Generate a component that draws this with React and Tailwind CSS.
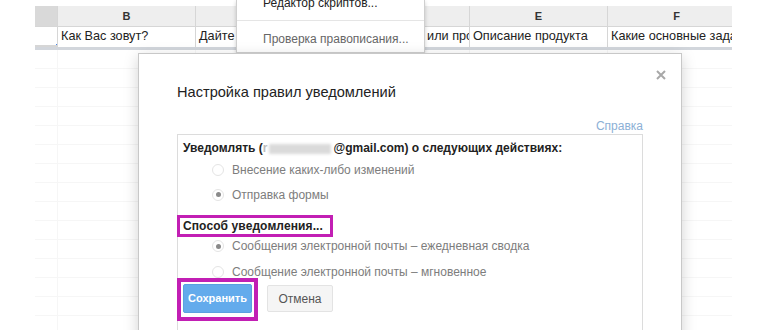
import React from 'react';

const cols = [
  { w: 'w-[23px]', head: '', text: '' },
  { w: 'w-[138px]', head: 'B', text: 'Как Вас зовут?' },
  { w: 'w-[137px]', head: 'C', text: 'Дайте ссылку' },
  { w: 'w-[137px]', head: 'D', text: 'Ваш веб-сайт или продукт', pad: 'pl-[10px]' },
  { w: 'w-[138px]', head: 'E', text: 'Описание продукта' },
  { w: 'w-[138px]', head: 'F', text: 'Какие основные задачи' },
];

const Radio = ({ checked }) => (
  <span className="w-[12px] h-[12px] rounded-full border border-[#e4e4e4] bg-white flex items-center justify-center shrink-0">
    {checked && <span className="w-[5px] h-[5px] rounded-full bg-[#8a8a8a]" />}
  </span>
);

const Option = ({ checked, label, className }) => (
  <div className={`flex items-center gap-[8px] pl-[29px] h-[20px] ${className}`}>
    <Radio checked={checked} />
    <span className="text-[12px] text-[#7d7d7d] whitespace-nowrap">{label}</span>
  </div>
);

export default function App() {
  return (
    <div className="relative w-[770px] h-[330px] overflow-hidden bg-white font-['Liberation_Sans',Arial,sans-serif]">
      {/* sheet in the background */}
      <div className="flex">
        <div className="w-[35px] shrink-0" />
        <div className="w-[697px] overflow-hidden">
          <div className="h-[6px]" />
          <div className="flex h-[21px] bg-[#eeeeee] border-b border-[#d6d6d6] w-max">
            {cols.map((c, i) => (
              <div
                key={i}
                className={`${c.w} shrink-0 border-r border-[#d6d6d6] flex items-center justify-center text-[11px] font-bold text-[#333] ${i === 0 ? 'bg-[#d9d9d9]' : ''}`}
              >
                {c.head}
              </div>
            ))}
          </div>
          <div className="flex h-[20px] w-max">
            {cols.map((c, i) => (
              <div
                key={i}
                className={`${c.w} shrink-0 border-r border-[#d6d6d6] flex items-center px-[3px] ${c.pad || ''} text-[12.7px] text-[#222] whitespace-nowrap overflow-hidden ${i === 0 ? 'relative border-2 border-[#4a86e8] border-l-0 border-t-0' : ''}`}
              >
                {c.text}
                {i === 0 && (
                  <span className="absolute right-[-4px] bottom-[-4px] w-[6px] h-[6px] bg-[#4a86e8] border border-white" />
                )}
              </div>
            ))}
          </div>
          <div className="h-[3px] bg-[#d2d6dc]" />
          {Array.from({ length: 15 }).map((_, r) => (
            <div key={r} className="flex h-[19px] w-max border-b border-[#dcdcdc]">
              {cols.map((c, i) => (
                <div key={i} className={`${c.w} shrink-0 border-r border-[#dcdcdc]`} />
              ))}
            </div>
          ))}
        </div>
      </div>

      {/* modal backdrop */}
      <div className="absolute left-0 right-0 top-[50px] bottom-0 bg-white/75" />

      {/* tools menu */}
      <div className="absolute left-[236px] top-0 w-[189px] h-[53px] bg-white border border-t-0 border-[#cfcfcf] shadow-[0_2px_4px_rgba(0,0,0,0.2)] overflow-hidden">
        <div className="-mt-[10px]">
          <div className="h-[25px] flex items-center pl-[26px] text-[12px] text-[#222]">Редактор скриптов...</div>
          <div className="my-[5px] border-t border-[#e5e5e5]" />
          <div className="h-[26px] flex items-center pl-[26px] text-[12px] text-[#666]">Проверка правописания...</div>
        </div>
      </div>

      {/* dialog */}
      <div className="absolute left-[138px] top-[53px] w-[544px] h-[300px] bg-white border border-[#c8c8c8] shadow-[0_4px_14px_rgba(0,0,0,0.18)] pl-[38px] pr-[38px] pt-[28px]">
        <svg className="absolute left-[517px] top-[16px] w-[10px] h-[10px]" viewBox="0 0 10 10">
          <path d="M1 1L9 9M9 1L1 9" stroke="#a8a8a8" strokeWidth="2" />
        </svg>
        <div className="h-[20px] leading-[20px] text-[14.6px] text-[#222]">Настройка правил уведомлений</div>
        <div className="mt-[16px] h-[16px] leading-[16px] text-right text-[12px] text-[#8cb0d6]">Справка</div>

        <div className="h-[200px] border border-b-0 border-[#dcdcdc] pl-[5px] pt-[5px]">
          <div className="h-[17px] leading-[17px] text-[12px] font-bold text-[#222] whitespace-nowrap flex items-center">
            <span>Уведомлять (</span>
            <span className="text-[#bbb]">r</span>
            <span className="inline-block w-[62px] h-[10px] mx-[2px] bg-[#dadada] blur-[1.5px]" />
            <span>@gmail.com) о следующих действиях:</span>
          </div>
          <Option className="h-[25px]" label="Внесение каких-либо изменений" />
          <Option className="h-[25px]" checked label="Отправка формы" />

          <div className="mt-[8px] -ml-[6px] w-[156px] h-[22px] border-[3px] border-[#c21fb4] pl-[3px] flex items-center text-[12px] font-bold tracking-[0.1px] text-[#222] whitespace-nowrap">
            Способ уведомления...
          </div>
          <Option className="-mt-[1px]" checked label="Сообщения электронной почты – ежедневная сводка" />
          <Option className="mt-[6px]" label="Сообщение электронной почты – мгновенное" />

          <div className="-mt-[4px] -ml-[6px] flex items-start gap-[9px]">
            <div className="w-[81px] h-[43px] border-4 border-[#c21fb4] px-[2px] pt-[2px]">
              <button className="w-full h-[29px] rounded-[2px] bg-[#63abec] border border-[#5aa0e0] text-white text-[11px] font-bold">
                Сохранить
              </button>
            </div>
            <button className="mt-[7px] w-[66px] h-[27px] rounded-[2px] bg-[#f5f5f5] border border-[#e3e3e3] text-[12px] text-[#555]">
              Отмена
            </button>
          </div>
        </div>
      </div>
    </div>
  );
}
